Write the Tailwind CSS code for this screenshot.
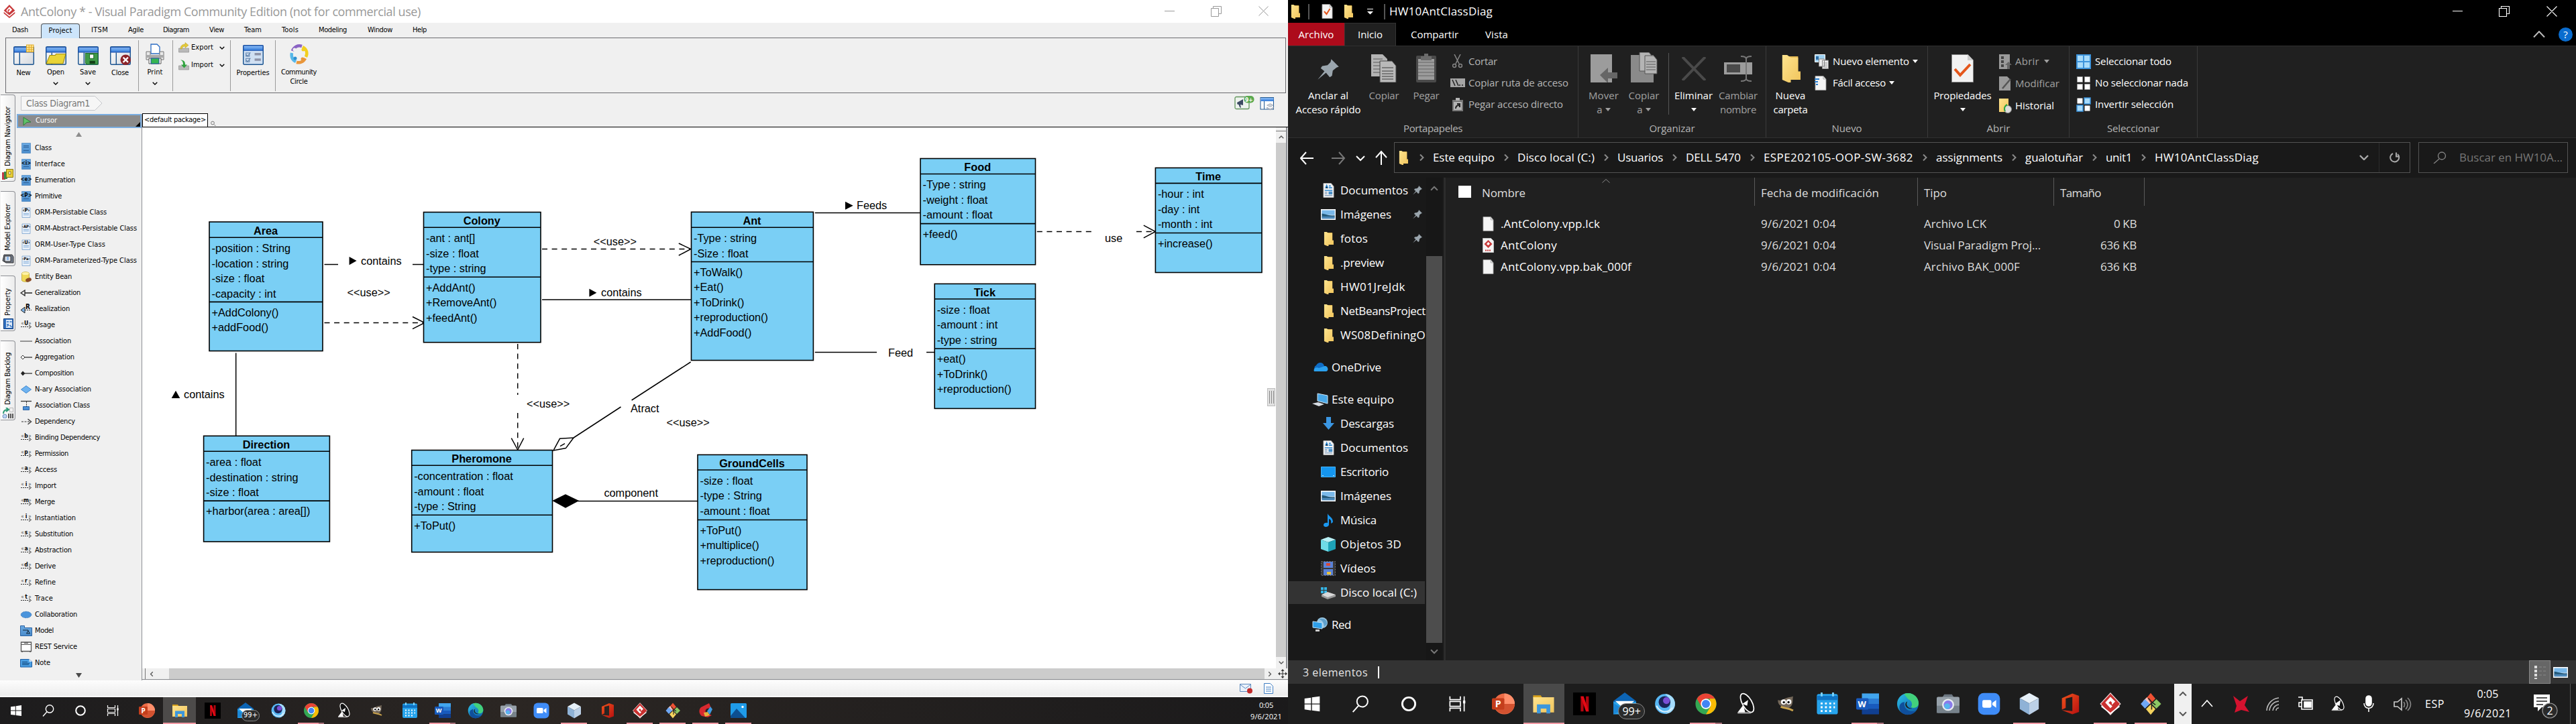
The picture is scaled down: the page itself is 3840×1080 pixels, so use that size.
<!DOCTYPE html>
<html lang="es">
<head>
<meta charset="utf-8">
<title>Escritorio</title>
<script src="https://cdn.jsdelivr.net/npm/@tailwindcss/browser@4"></script>
</head>
<body class="bg-black">
<svg class="absolute h-0 w-0">
  <defs>
    <linearGradient id="gWin" x1="0" y1="0" x2="0" y2="1"><stop offset="0" stop-color="#8fc0f8"/><stop offset="1" stop-color="#2f78d8"/></linearGradient>
    <linearGradient id="gPane" x1="0" y1="0" x2="1" y2="1"><stop offset="0" stop-color="#fff"/><stop offset="1" stop-color="#d5d8dd"/></linearGradient>
    <linearGradient id="gFold" x1="0" y1="0" x2="1" y2="1"><stop offset="0" stop-color="#ffe48e"/><stop offset="1" stop-color="#f0c45c"/></linearGradient>
    <linearGradient id="gBlue" x1="0" y1="0" x2="0" y2="1"><stop offset="0" stop-color="#6aa9e2"/><stop offset="1" stop-color="#4a8ccb"/></linearGradient>
    <linearGradient id="gEdge" x1="0" y1="0" x2="1" y2="1"><stop offset="0" stop-color="#2cc0e8"/><stop offset="1" stop-color="#0c59a4"/></linearGradient>
    <linearGradient id="gOff" x1="0" y1="0" x2="1" y2="1"><stop offset="0" stop-color="#f0531c"/><stop offset="1" stop-color="#b81010"/></linearGradient>
  </defs>
  <symbol id="win" viewBox="0 0 24 24"><path fill="#fff" d="M4 6.300l6.800-.9v6.200H4zM11.800 5.200 20 4v7.600h-8.200zM4 12.600h6.800v6.200L4 17.900zM11.800 12.600H20V20l-8.200-1.100z"/></symbol>
  <symbol id="search" viewBox="0 0 24 24"><g fill="none" stroke="#fff" stroke-width="1.400"><circle cx="14" cy="9.500" r="5.700"/><path d="M10 13.800 4 20.500"/></g></symbol>
  <symbol id="ring" viewBox="0 0 24 24"><circle cx="12" cy="12" r="6.800" fill="none" stroke="#fff" stroke-width="2"/></symbol>
  <symbol id="tview" viewBox="0 0 24 24"><g fill="none" stroke="#fff" stroke-width="1.200"><path d="M4.500 4v3.500h11V4M4.500 20v-3.500h11V20M4.500 9.500h11v5h-11zM19.500 4v16"/></g><path fill="#fff" d="M18.300 8.500h2.400v3h-2.400z"/></symbol>
  <symbol id="ppt" viewBox="0 0 24 24"><circle cx="13" cy="12" r="11" fill="#ed6c47"/><path d="M13 1a11 11 0 0 1 11 11H13z" fill="#ff8f6b"/><path d="M2 12h22a11 11 0 0 1-21 4z" fill="#d35230"/><rect x="0" y="6" width="13" height="12" rx="1.200" fill="#c43e1c"/><text x="3.400" y="15.600" font-family="Open Sans" font-weight="700" font-size="10" fill="#fff">P</text></symbol>
  <symbol id="fold" viewBox="0 0 24 24"><path fill="#d9a21b" d="M1 3h8l2 3H1z"/><path fill="url(#gFold)" d="M1 5h22v16H1z"/><path fill="#3d97dc" d="M5 12.500h14V22h-4v-5H9v5H5z"/></symbol>
  <symbol id="nfx" viewBox="0 0 24 24"><path fill="#000" d="M0 0h24v24H0z"/><path fill="#b1060f" d="M8 4h3v16H8zM13.500 4h3v16h-3z"/><path fill="#e50914" d="M8 4h3l5.500 16h-3z"/></symbol>
  <symbol id="mail" viewBox="0 0 24 24"><path fill="#0c64b4" d="M0 9 12 0l12 9v3H0z"/><path fill="#2aa5ec" d="M0 10h24v13H0z"/><path fill="#fff" d="M2 9h20l-10 9z"/><path fill="#1c87d6" d="M0 23V11l11 7z"/></symbol>
  <symbol id="chat" viewBox="0 0 24 24"><circle cx="12" cy="12" r="10.500" fill="#58b8f4"/><path d="M12 1.500a10.500 10.500 0 0 1 0 21c7-3 8-16 0-21z" fill="#a6dcfb"/><circle cx="11.500" cy="10" r="6.200" fill="#1b2458"/><circle cx="13.500" cy="8.500" r="3.600" fill="#7a4fd6"/><path d="M3 14c4 8 12 8 17 2" stroke="#d7f0fe" stroke-width="1.500" fill="none"/></symbol>
  <symbol id="chrome" viewBox="0 0 24 24"><circle cx="12" cy="12" r="11" fill="#34a853"/><path fill="#ea4335" d="M2.500 6.500A11 11 0 0 1 21.500 6.500H12L7.200 14.800z"/><path fill="#fbbc05" d="M21.500 6.500A11 11 0 0 1 12 23l4.800-8.200L16 6.500z"/><circle cx="12" cy="12" r="5.400" fill="#fff"/><circle cx="12" cy="12" r="4.300" fill="#4285f4"/></symbol>
  <symbol id="dish" viewBox="0 0 24 24"><ellipse cx="13" cy="11" rx="5" ry="11" transform="rotate(-30 13 11)" fill="#111" stroke="#fff" stroke-width="1.200"/><path d="M8 12 14 8l-1 6zM3 21l6-8 2 8z" fill="#fff"/><path d="M3 21.500h14" stroke="#bbb" stroke-width="1.300"/></symbol>
  <symbol id="gimp" viewBox="0 0 24 24"><path fill="#75695b" d="M3 8c3 1 4-1 5 0 3-3 8-3 11-4-1 4 1 9-4 12-4 1-7 0-9-2-2-1-3-3-3-6z"/><circle cx="9" cy="10" r="2.700" fill="#fff"/><circle cx="14.500" cy="9.800" r="2.700" fill="#fff"/><circle cx="9.300" cy="10.300" r="1.200"/><circle cx="14.200" cy="10.200" r="1.200"/><path d="M6 15c4 2 8 1 13 4" stroke="#c9a24b" stroke-width="2" fill="none"/></symbol>
  <symbol id="cal" viewBox="0 0 24 24"><rect x="1" y="1.500" width="22" height="21.500" rx="2" fill="#27a4ec"/><path fill="#0f74c4" d="M1 3.500h22V8H1z"/><path stroke="#7fd3fb" stroke-width="2" d="M6 0v4M18 0v4"/><path stroke="#fff" stroke-width="2" stroke-dasharray="2 2.500" d="M5 11.500h15M5 15.500h15M5 19.500h11"/></symbol>
  <symbol id="word" viewBox="0 0 24 24"><path fill="#41a5ee" d="M6 1h18v6H6z"/><path fill="#2b7cd3" d="M6 6.500h18V12H6z"/><path fill="#185abd" d="M6 12h18v5.500H6z"/><path fill="#103f91" d="M6 17.500h18V23H6z"/><rect x="0" y="6" width="13" height="12" rx="1.200" fill="#185abd"/><text x="1.700" y="15.300" font-family="Open Sans" font-weight="700" font-size="9" fill="#fff">W</text></symbol>
  <symbol id="edge" viewBox="0 0 24 24"><circle cx="12" cy="12" r="11.300" fill="url(#gEdge)"/><path fill="#42d17c" d="M8 1.500c9-3 16 4 15.300 10.500-.5 4-5 5-8 3.500 2-3 1-7-3-8.500z"/><path fill="#0f4f9c" d="M8.500 10c-1 6 3 11 12 9.500A11.300 11.300 0 0 1 5 21C1 15 4 10 8.500 10z"/><path fill="#1e1e1e" d="M11.500 9.500c-2 3 0 7 5 7.300-2 1-6 0-7-3-.5-2 .5-4 2-4.300z"/></symbol>
  <symbol id="cam" viewBox="0 0 24 24"><path fill="#6b7680" d="M8 2h8l2 3H6z"/><rect x="0" y="4.500" width="24" height="17" rx="1.500" fill="#97a1aa"/><path fill="#77828b" d="M0 14h24v7.500H0z"/><circle cx="12" cy="13" r="6.300" fill="#e8edf1"/><circle cx="12" cy="13" r="4.700" fill="#8a7bea"/><circle cx="11" cy="14.500" r="3" fill="#57b6ee"/></symbol>
  <symbol id="zoom" viewBox="0 0 24 24"><rect x=".5" y=".5" width="23" height="23" rx="6" fill="#3f8cf7"/><rect x="5" y="8" width="9.500" height="8" rx="1.500" fill="#fff"/><path fill="#fff" d="m15.500 11 4-3v8l-4-3z"/></symbol>
  <symbol id="nb" viewBox="0 0 24 24"><path fill="#e6f0f8" d="M12 .5 22 6l-10 5.500L2 6z"/><path fill="#8fb2d6" d="M2 6l10 5.500V23.500L2 17.500z"/><path fill="#bcd0e6" d="M22 6l-10 5.500V23.500l10-6z"/></symbol>
  <symbol id="office" viewBox="0 0 24 24"><path fill="url(#gOff)" d="M15 1l7 2.500v17L15 23 4 18.500l11 1V4.500L8 6.300v10L4 18V6z"/></symbol>
  <symbol id="vp" viewBox="0 0 24 24"><path fill="#c9302f" stroke="#f3dede" stroke-width=".8" d="M12 .6 22.500 12 12 23.400 1.500 12z"/><path fill="none" stroke="#fff" stroke-width="1.300" d="M2.500 14.500 12 22l9.500-7.500"/><path fill="#fff" d="M12 4.500 17 9.500l-3.500 3.500v-2.500L12 9l-2 2 4 3.500-2 2-5.500-6z"/></symbol>
  <symbol id="vplogo" viewBox="0 0 24 24"><path fill="#c8393a" d="M12 0 22 10.500 12 19 2 10.500z"/><path fill="#c8393a" d="M2 13l10 8.300L22 13v2.500L12 24 2 15.500z"/><path fill="#fff" d="M12 4l5 5-5 5-2-2 3-3-1.500-1.500-2.500 2.500v4.500L6.500 10z"/></symbol>
  <symbol id="git" viewBox="0 0 24 24"><path fill="#f05133" d="m12 .5 5 6-5 5-4-6z"/><path fill="#f7c6bd" d="m8 5 4 6.500-2 1L4 9z"/><path fill="#6fa8f5" d="M6 7l5 5-5 5-4.500-5z"/><path fill="#8cc864" d="M18 7l5 5-5 5-5-5z"/><path fill="#f4d35e" d="m12 12.500 5 5-5 6-5-6z"/><path stroke="#222" stroke-width="1.100" fill="none" d="M9.500 6 13 10v8m0-8 4 3"/></symbol>
  <symbol id="cc" viewBox="0 0 24 24"><path fill="#d8292f" d="M17 1 5 7c-4 4-3 10 1 13l9 2 6-3-5-2c-5 0-6-6-2-8l6-1z"/><path fill="#3f9ae0" d="m14 13 5-7 3 4-4 8z"/><path fill="#e8b13c" d="m9 15 6-1 3 5-7 2z"/></symbol>
  <symbol id="photos" viewBox="0 0 24 24"><rect x="0" y="1" width="24" height="22" rx="1.500" fill="#1f9be8"/><path fill="#0d4f90" d="M0 20 9 9l13 14H0z"/><circle cx="18" cy="6.500" r="1.700" fill="#fff"/></symbol>
  <symbol id="qfold" viewBox="0 0 16 20" preserveAspectRatio="none"><path fill="#e9bd55" d="M3 1h11v17H3z"/><path fill="url(#gFold)" d="M1 0h4l3 2v18H6l-5-2zM8 2h6v10h2v6H8z"/></symbol>
  <symbol id="doc" viewBox="0 0 18 20" preserveAspectRatio="none"><path fill="#f4f4f4" stroke="#9a9a9a" stroke-width=".8" d="M1 .5h12l4 4v15H1z"/><path fill="none" stroke="#9a9a9a" stroke-width=".8" d="M13 .5v4h4"/></symbol>
  <symbol id="docb" viewBox="0 0 18 20" preserveAspectRatio="none"><path fill="#f4f4f4" stroke="#bbb" stroke-width=".8" d="M1 .5h12l4 4v15H1z"/><path stroke="#2d87d0" stroke-width="1.500" d="M4 7 6 3l2 4M9.500 4h3M9.500 6.500h5M3 10h12"/><path stroke="#5a7fa8" d="M3 12.500h4M3 14.500h4M3 17h12"/><path fill="#4a90c8" d="M9 11.500h6v4H9z"/></symbol>
  <symbol id="pic" viewBox="0 0 22 14" preserveAspectRatio="none"><path fill="#dce8f2" stroke="#fff" d="M.5.500h21v13H.5z"/><path fill="#7ab9ea" d="M1.500 1.500h19v6h-19z"/><path fill="#24597a" d="M1.500 6c5 0 9 3 19 2v3h-19z"/><path fill="#4c88b8" d="M1.500 9.500h19v3h-19z"/></symbol>
  <symbol id="pin" viewBox="0 0 16 16"><path fill="#9aa5ad" d="m10 1 5 5-1.500.5-2.500 2-.5 3.500L9 13 6.500 10 1 14.500 5.500 9 3 7l1-1.500 3.500-.5L9.500 3z"/></symbol>
  <symbol id="appwin" viewBox="0 0 30 30"><rect x=".7" y="3.700" width="28.600" height="25.600" rx="1.500" fill="url(#gPane)" stroke="#1c5590" stroke-width="1.400"/><path fill="url(#gWin)" stroke="#1a4fae" d="M1 4.500h28v7H1z"/><path stroke="#1c5590" stroke-width="1.400" d="M9 12v17"/></symbol>
  <symbol id="chev" viewBox="0 0 8 5"><path d="m.7.700 3.300 3.300L7.300.7" fill="none" stroke="currentColor" stroke-width="1.300"/></symbol>
  <symbol id="tri" viewBox="0 0 8 5"><path d="M0 0h8L4 5z" fill="currentColor"/></symbol>
</svg>

<div class="flex h-[1080px] w-[3840px] overflow-hidden whitespace-nowrap">

<!-- ================= Visual Paradigm ================= -->
<section class="flex h-full w-[1920px] flex-col overflow-hidden bg-[#f0f0f0] font-['DejaVu_Sans_Condensed','DejaVu_Sans',sans-serif] text-[11px] text-black">
  <header class="flex h-[34px] shrink-0 items-center bg-white pl-1">
    <svg class="h-6 w-5" preserveAspectRatio="none"><use href="#vplogo"/></svg>
    <span data-w="596" class="ml-[7px] font-['Open_Sans',sans-serif] text-[18px] leading-[34px] text-[#999]">AntColony * - Visual Paradigm Community Edition (not for commercial use)</span>
    <div class="mr-[29px] ml-auto flex items-center">
      <svg class="h-4 w-[155px]" viewBox="0 0 155 16" fill="none" stroke="#999"><path d="M0 7.500h15M69.500 3.500h11v12h-11zM72.500 3.500v-3h12v11h-4M140.500.500l14 14M154.500.500l-14 14"/></svg>
    </div>
  </header>
  <nav class="relative z-10 -mb-px flex h-[23px] shrink-0 items-center pl-[18px]">
    <span data-w="24">Dash</span>
    <span class="ml-[19px] flex h-[22px] w-[58px] items-center justify-center self-end rounded-t-sm border border-b-0 border-[#4f5358] bg-[#cde5fb]"><span data-w="35">Project</span></span>
    <span data-w="25" class="ml-[17px]">ITSM</span>
    <span data-w="23" class="ml-[30px]">Agile</span>
    <span data-w="39" class="ml-[29px]">Diagram</span>
    <span data-w="22" class="ml-[30px]">View</span>
    <span data-w="26" class="ml-[30px]">Team</span>
    <span data-w="25" class="ml-[30px]">Tools</span>
    <span data-w="42" class="ml-[30px]">Modeling</span>
    <span data-w="37" class="ml-[31px]">Window</span>
    <span data-w="21" class="ml-[30px]">Help</span>
  </nav>
  <div class="mr-[3px] ml-2 flex h-[83px] shrink-0 border border-[#6b6b6f] pl-[2px]">
    <div class="flex w-12 flex-col items-center pt-[9px]">
      <svg class="h-[31px] w-[31px]" viewBox="0 0 30 30"><use href="#appwin"/><path fill="#ffe9a0" stroke="#e0a81e" d="M19 1h10v10H19zM22.500 1v10M25.800 1v10M19 4.500h10M19 7.800h10"/></svg>
      <span data-w="21" class="mt-[4px] leading-[15px]">New</span>
    </div>
    <div class="flex w-12 flex-col items-center pt-[9px]">
      <svg class="h-[31px] w-[31px]" viewBox="0 0 30 30"><use href="#appwin"/><path fill="#e9d436" stroke="#a08c10" d="M6 16h8l1-2h14l-4 14H1z"/></svg>
      <span data-w="26" class="mt-[3px] leading-[15px]">Open</span><svg class="mt-[7px] h-[5px] w-2"><use href="#chev"/></svg>
    </div>
    <div class="flex w-12 flex-col items-center pt-[9px]">
      <svg class="h-[31px] w-[31px]" viewBox="0 0 30 30"><use href="#appwin"/><path fill="#3f9a48" stroke="#1e6b28" d="M11 13h18v16H13l-2-2z"/><path fill="#fff" stroke="#1e6b28" d="M17 14.500h6v6h-6z"/><path fill="#123f18" d="M17 24h8v4h-8z"/></svg>
      <span data-w="24" class="mt-[3px] leading-[15px]">Save</span><svg class="mt-[7px] h-[5px] w-2"><use href="#chev"/></svg>
    </div>
    <div class="flex w-12 flex-col items-center pt-[9px]">
      <svg class="h-[31px] w-[31px]" viewBox="0 0 30 30"><use href="#appwin"/><circle cx="22.500" cy="22.500" r="7.500" fill="#8c2328"/><path stroke="#fff" stroke-width="2.200" d="m19 19 7 7m0-7-7 7"/></svg>
      <span data-w="26" class="mt-[4px] leading-[15px]">Close</span>
    </div>
    <div class="mt-[3px] ml-[3px] h-[76px] w-px bg-[#9a9a9a]"></div>
    <div class="flex w-[48px] flex-col items-center pt-[8px]">
      <svg class="h-8 w-7" viewBox="0 0 28 32"><path fill="#fff" stroke="#2b6cc4" stroke-width="1.300" d="M8 1h9l4 4v10H8z"/><path fill="#e8e8e8" stroke="#777" d="M1 12h6v6h14v-6h6v12H1z"/><path fill="#a9a9a9" d="M1 17h26v4H1z"/><path fill="#fff" stroke="#555" d="M5 22h18v8H5z"/><path fill="#35b552" stroke="#1b52a4" d="M8 22h12v8H8z"/></svg>
      <span data-w="23" class="mt-[3px] leading-[15px]">Print</span><svg class="mt-[7px] h-[5px] w-2"><use href="#chev"/></svg>
    </div>
    <div class="mt-[3px] ml-[2px] h-[76px] w-px bg-[#9a9a9a]"></div>
    <div class="flex w-[85px] flex-col gap-[10px] pt-[6px] pl-2">
      <div class="flex h-4 items-center"><svg class="h-4 w-4" viewBox="0 0 16 16"><path fill="#b9b9b9" stroke="#888" stroke-width=".6" d="M.5 9h15v6H.5z"/><path fill="#e3c93a" stroke="#b79b17" stroke-width=".5" d="M3 10c0-5 3-7 7-7V.5l5 4-5 4V6c-3 0-4 1-5 4z"/></svg><span data-w="33" class="ml-[3px]">Export</span><svg class="ml-[9px] h-[5px] w-2"><use href="#chev"/></svg></div>
      <div class="flex h-4 items-center"><svg class="h-4 w-4" viewBox="0 0 16 16"><path fill="#b9b9b9" stroke="#888" stroke-width=".6" d="M.5 9h15v6H.5z"/><path fill="#2fa23e" d="M3 .5c5 0 7 2 7 7h3l-4.500 5-4.500-5h3c0-4-1-6-4-7z"/></svg><span data-w="33" class="ml-[3px]">Import</span><svg class="ml-[9px] h-[5px] w-2"><use href="#chev"/></svg></div>
    </div>
    <div class="mt-[3px] h-[76px] w-px bg-[#9a9a9a]"></div>
    <div class="flex w-[66px] flex-col items-center pt-[9px]">
      <svg class="h-[31px] w-[31px]" viewBox="0 0 30 30"><rect x=".7" y="1.700" width="28.600" height="27.600" rx="1.500" fill="#cfdff2" stroke="#1c5590" stroke-width="1.400"/><path fill="url(#gWin)" stroke="#1a4fae" d="M1 2h28v7H1z"/><path fill="none" stroke="#5b7fa8" d="M4.500 12.500h5v5h-5zM4.500 20.500h5v5h-5zM5 15l2 2 4-5M5 23l2 2 4-5"/><path fill="#8d93a8" d="M17 12.500h9V16h-9zM17 20.500h9V24h-9z"/></svg>
      <span data-w="49" class="mt-[4px] leading-[15px]">Properties</span>
    </div>
    <div class="mt-[3px] h-[76px] w-px bg-[#9a9a9a]"></div>
    <div class="flex w-[69px] flex-col items-center pt-[8px]">
      <svg class="h-8 w-[30px]" viewBox="0 0 30 32" fill="none" stroke-width="4.500"><path stroke="#8a63c4" d="M5 11C7 5 13 2 19 4"/><path stroke="#f2cf1e" d="M20 5c6 3 8 9 5 15"/><path stroke="#e9963a" d="M24 22c-3 6-9 7-13 6"/><path stroke="#56b7e8" d="M10 27c-6-3-7-8-6-13"/><circle cx="8" cy="9" r="2.500" fill="#f0f0f0" stroke="none"/><circle cx="21" cy="9" r="2.500" fill="#f2cf1e" stroke="none"/><circle cx="20" cy="23" r="2.500" fill="#e9963a" stroke="none"/><circle cx="9" cy="22" r="2.500" fill="#2d8fd0" stroke="none"/></svg>
      <span data-w="53" class="mt-[4px] leading-[14px]">Community</span><span data-w="26" class="leading-[14px]">Circle</span>
    </div>
  </div>

  <div class="flex h-[876px] shrink-0">
    <aside id="sideTabs" class="flex w-[25px] flex-col gap-[14px] pt-[2px] pl-px"></aside>
    <div class="flex w-[1895px] flex-col">
      <div class="flex h-[31px] items-start pt-1 pl-[6px]">
        <div class="relative flex h-[22px] w-[122px] items-center pl-2">
          <svg class="absolute inset-0 h-full w-full" viewBox="0 0 122 22"><path fill="#f6f6f6" stroke="#c4c6ca" d="M.5.500h110l10.500 10.500-10.500 10.500H.5z"/></svg>
          <span data-w="95" class="relative text-[14px] text-[#777]">Class Diagram1</span>
        </div>
        <svg class="mr-[20px] ml-auto h-[22px] w-[60px]" viewBox="0 0 60 22"><rect x="1" y="1.500" width="21" height="18" rx="2" fill="#eef3ee" stroke="#62955c" stroke-width="1.300"/><path fill="#3d4a63" d="M4 10 13 5v9l-4-1 1 5-2-1-1.500-4-2-.5z"/><rect x="14.500" y="0" width="15" height="10.500" rx="5" fill="#5aa84e"/><text x="16" y="8.500" font-size="8.500" font-weight="700" fill="#fff" font-family="DejaVu Sans Condensed">9+</text><g transform="translate(38.500 2)"><rect x=".5" y=".5" width="19.500" height="17.500" fill="#fff" stroke="#1c5590"/><path fill="url(#gWin)" d="M1 1h19v5H1z"/><path stroke="#1c5590" d="M6 6v12"/><path fill="#c9cfd8" stroke="#8a94a4" stroke-width=".6" d="m10 12 5-2.500 5 2.500-5 2.500zM10 15l5 2.500 5-2.500v1.500L15 19l-5-2.500z"/></g></svg>
      </div>
      <div class="flex h-[845px]">
        <div class="flex w-[187px] flex-col border-r border-[#8f9196]">
          <div class="relative flex h-[21px] w-[186px] shrink-0 items-center border-2 border-[#7aade0] bg-[#8b8b8b] pl-[7px] text-white">
            <svg class="h-[14px] w-[13px]" viewBox="0 0 13 14"><path fill="#5fc36a" stroke="#2d7c38" d="m1 1 11 7-6 .5L1 13z"/></svg>
            <span data-w="32" class="ml-[6px]">Cursor</span>
            <svg class="absolute right-0 bottom-0 h-[7px] w-[7px]"><path d="M7 0v7H0z"/></svg>
          </div>
          <div class="flex h-[18px] shrink-0 items-center justify-center pr-px text-[#8d8d8d]"><svg class="h-[7px] w-[9px] rotate-180" viewBox="0 0 8 5" preserveAspectRatio="none"><path d="M0 0h8L4 5z" fill="currentColor"/></svg></div>
          <div id="palette" class="flex flex-col"></div>
          <div class="flex h-[13px] items-center justify-center pr-px text-[#4a4a4a]"><svg class="h-[7px] w-[9px]" viewBox="0 0 8 5" preserveAspectRatio="none"><path d="M0 0h8L4 5z" fill="currentColor"/></svg></div>
        </div>
        <div class="flex w-[1708px] flex-col">
          <div class="flex h-5 shrink-0 items-end border-b-[1.500px] border-black">
            <div class="flex h-5 w-[98px] items-center border-[1.500px] border-b-0 border-black bg-white pl-[2px]"><span data-w="92">&lt;default package&gt;</span></div>
            <svg class="mb-px ml-1 h-2 w-2" viewBox="0 0 8 8" fill="none" stroke="#777"><circle cx="3" cy="3.500" r="2.400"/><path d="m5 5.500 2.500 2.500"/></svg>
          </div>
          <div class="flex h-[807px]">
            <div class="relative w-[1690px] bg-white">
              <svg id="diagram" class="block h-[807px] w-[1690px]" viewBox="212 190 1690 807"></svg>
              <div class="absolute top-[389px] right-px flex h-[27px] w-3 justify-center gap-[2px] border border-[#bdbdbd] bg-[#e1e1e1] py-[3px]"><i class="w-px bg-[#888]"></i><i class="w-px bg-[#888]"></i><i class="w-px bg-[#888]"></i></div>
            </div>
            <div class="flex w-[17px] flex-col border-r-2 border-[#8f9196] bg-[#ccc]">
              <div class="h-[6px] border-b border-[#777] bg-[#f0f0f0]"></div>
              <div class="flex h-[17px] items-center justify-center bg-[#f0f0f0] text-[#555]"><svg class="h-[5px] w-2 rotate-180"><use href="#chev"/></svg></div>
              <div class="mt-auto flex h-[17px] items-center justify-center bg-[#f0f0f0] text-[#555]"><svg class="h-[5px] w-2"><use href="#chev"/></svg></div>
            </div>
          </div>
          <div class="flex h-[17px] items-stretch border-b-[1.500px] border-[#8a8c90] bg-[#ccc]">
            <div class="w-[5px] border-r border-[#777] bg-[#f0f0f0]"></div>
            <div class="flex w-[35px] items-center bg-[#f0f0f0] pl-[5px] text-[#555]"><svg class="h-[5px] w-2 rotate-90"><use href="#chev"/></svg></div>
            <div class="ml-auto flex w-[35px] items-center bg-[#f0f0f0] pl-1 text-[#555]"><svg class="h-[5px] w-2 -rotate-90"><use href="#chev"/></svg><svg class="ml-2 h-[14px] w-[14px]" viewBox="0 0 14 14"><path fill="#333" d="m7 0 2.500 3h-5zM7 14l2.500-3h-5zM0 7l3-2.500v5zM14 7l-3-2.500v5z"/><path stroke="#333" d="M7 2v10M2 7h10"/></svg></div>
          </div>
        </div>
      </div>
    </div>
  </div>
  <footer class="flex h-[25px] shrink-0 items-center justify-end border-b-2 border-white bg-linear-to-b from-[#fdfdfd] to-[#ececec] pr-[20px]">
    <svg class="h-[18px] w-[52px]" viewBox="0 0 52 18"><path fill="#eaf1fa" stroke="#5b89bd" d="M.5 2.500h16v11H.5z"/><path fill="none" stroke="#5b89bd" d="m.5 3 8 6 8-6"/><circle cx="15" cy="12.500" r="4" fill="#c22a2a"/><path fill="#fff" stroke="#3d7dc2" d="M36.500 1.500h9l4 4v11h-13z"/><path stroke="#3d7dc2" d="M39 7h8M39 10h8M39 13h8"/></svg>
  </footer>
  <div class="flex h-10 shrink-0 bg-linear-to-r from-[#1d1c1d] via-[#2b2623] via-40% to-[#1b1a1b] text-white">
    <div id="barL" class="flex"></div>
    <div class="mr-[9px] ml-auto flex flex-col items-center justify-center font-['Open_Sans',sans-serif] text-[11px] leading-[17px]"><span data-w="21">0:05</span><span data-w="47">9/6/2021</span></div>
  </div>
</section>

<!-- ================= Explorador de archivos ================= -->
<section class="flex h-full w-[1920px] flex-col overflow-hidden bg-[#191919] font-['Open_Sans','Noto_Sans',sans-serif] text-[15px] text-white">
  <header class="flex h-[34px] shrink-0 items-center bg-black pl-1">
    <svg class="h-[21px] w-[14px]"><use href="#qfold"/></svg>
    <i class="ml-3 h-[23px] w-[2px] border-x border-[#555]"></i>
    <svg class="ml-[18px] h-[22px] w-[17px]"><use href="#doc"/><path d="m4 11 3.500 4 5-8" stroke="#e4561b" stroke-width="2" fill="none"/></svg>
    <svg class="ml-4 h-[21px] w-[14px]"><use href="#qfold"/></svg>
    <svg class="ml-[21px] h-[9px] w-[9px]" viewBox="0 0 9 9"><path fill="#fff" d="M0 0h9v1H0zM0 4h9L4.500 8.500z"/></svg>
    <i class="ml-4 h-[23px] w-[2px] border-x border-[#555]"></i>
    <span data-w="154" class="ml-[6px] text-[17px]">HW10AntClassDiag</span>
    <svg class="mr-7 ml-auto h-4 w-[156px]" viewBox="0 0 156 16" fill="none" stroke="#fff" stroke-width="1.100"><path d="M0 7.500h15M69.500 3.500h11v12h-11zM72.500 3.500v-3h12v11h-4M140.500.500l15 15M155.500.500l-15 15"/></svg>
  </header>
  <nav class="flex h-[34px] shrink-0 items-center bg-black text-[15px]">
    <span class="flex h-full w-[84px] items-center justify-center bg-[#ad0b1b]"><span data-w="53">Archivo</span></span>
    <span class="flex h-full w-[77px] items-center justify-center border border-b-0 border-[#333] bg-[#202020]"><span data-w="37">Inicio</span></span>
    <span data-w="71" class="ml-[22px]">Compartir</span>
    <span data-w="34" class="ml-10">Vista</span>
    <svg class="mr-[20px] ml-auto h-[10px] w-[18px]" viewBox="0 0 18 10"><path d="m1 9.500 8-8.500 8 8.500" fill="none" stroke="#bbb" stroke-width="2"/></svg>
    <span class="mr-[5px] flex h-[21px] w-[21px] items-center justify-center rounded-full bg-[#0a6cce] text-[15px]">?</span>
  </nav>
  <div class="flex h-[138px] shrink-0 border-y border-[#303030] bg-[#202020] text-[15px] leading-[21px]">
    <!-- Portapapeles -->
    <div class="flex w-[433px] flex-col border-r border-[#3a3a3a]">
      <div class="flex h-[112px]">
        <div class="flex w-[120px] flex-col items-center pt-[13px]"><svg class="mt-1 mb-[10px] h-[36px] w-[36px]"><use href="#pin"/></svg><span data-w="60">Anclar al</span><span data-w="97">Acceso rápido</span></div>
        <div class="flex w-[46px] flex-col items-center pt-[12px] text-[#a0a0a0]"><svg class="mb-[9px] h-[42px] w-[38px]" viewBox="0 0 38 42"><path fill="#b4b4b4" d="M0 0h17l7 7v26H0z"/><path stroke="#777" stroke-width="1.500" d="M3 7h14M3 12h17M3 17h17M3 22h17M3 27h17"/><path fill="#b9b9b9" stroke="#444" d="M13 10h18l6 7v25H13z"/><path stroke="#666" stroke-width="1.500" d="M16 20h17M16 25h17M16 29h17M16 33h17M16 37h17"/></svg><span data-w="45">Copiar</span></div>
        <div class="ml-5 flex w-[40px] flex-col items-center pt-[11px] text-[#a0a0a0]"><svg class="mb-[9px] h-[43px] w-[30px]" viewBox="0 0 30 43"><rect width="30" height="40" y="3" rx="2" fill="#4a4a4a"/><path fill="#9c9c9c" d="M3 8h24v31H3z"/><path stroke="#777" stroke-width="1.300" d="M3 13h24M3 18h24M3 23h24M3 28h24M3 33h24"/><path fill="#6b6b6b" d="M7 4h5V0h6v4h5v6H7z"/></svg><span data-w="39">Pegar</span></div>
        <div class="ml-[16px] flex flex-col gap-[11px] pt-[12px] text-[#b5b5b5]">
          <div class="flex h-[21px] items-center"><svg class="mr-[9px] ml-[3px] h-[21px] w-[15px]" viewBox="0 0 15 21" fill="none" stroke="#888" stroke-width="1.500"><path d="m3 0 7 14M12 0 5 14"/><circle cx="3" cy="17" r="2.500"/><circle cx="12" cy="17" r="2.500"/></svg><span data-w="43">Cortar</span></div>
          <div class="flex h-[21px] items-center"><svg class="mr-[5px] h-[13px] w-[22px]"><path fill="#a5a5a5" d="M0 0h22v13H0z"/><path stroke="#222" stroke-width="1.500" d="m3 2 4 9M8 2l4 9M13 10h2M17 10h2"/></svg><span data-w="149">Copiar ruta de acceso</span></div>
          <div class="flex h-[21px] items-center"><svg class="mr-2 ml-[3px] h-[20px] w-[16px]"><path fill="#777" d="M0 3h16v17H0z"/><path fill="#b5b5b5" d="M2 6h12v12H2zM5 0h6v4H5z"/><path stroke="#222" stroke-width="2" fill="none" d="M5 16c0-4 2-5 5-5M7 9h4v5"/></svg><span data-w="141">Pegar acceso directo</span></div>
        </div>
      </div>
      <div class="flex justify-center text-[#b5b5b5]"><span data-w="88">Portapapeles</span></div>
    </div>
    <!-- Organizar -->
    <div class="flex w-[280px] flex-col border-r border-[#3a3a3a]">
      <div class="flex h-[112px]">
        <div class="flex w-[73px] flex-col items-center pt-[12px] pl-[2px] text-[#a0a0a0]"><svg class="mb-[9px] h-[42px] w-[40px]" viewBox="0 0 40 42"><path fill="#9c9c9c" d="M0 0h32v42H0z"/><path fill="#666" d="M14 31 26 20v7h14v9H26v7z"/></svg><span data-w="45">Mover</span><span class="flex items-center gap-1">a <svg class="h-[5px] w-2"><use href="#tri"/></svg></span></div>
        <div class="flex w-[49px] flex-col items-center pt-[9px] text-[#a0a0a0]"><svg class="mb-[9px] h-[45px] w-[40px]" viewBox="0 0 40 45"><path fill="#8a8a8a" d="M0 4h34v41H0z"/><path fill="#b4b4b4" stroke="#555" d="M13 0h14l5 6v22H13z"/><path fill="#b4b4b4" stroke="#555" d="M21 5h13l5 6v21H21z"/><path stroke="#777" stroke-width="1.300" d="M23 14h14M23 18h14M23 22h14M23 26h14"/></svg><span data-w="46">Copiar</span><span class="flex items-center gap-1">a <svg class="h-[5px] w-2"><use href="#tri"/></svg></span></div>
        <div class="mt-[10px] ml-[12px] h-[92px] w-px bg-[#555]"></div>
        <div class="flex w-[73px] flex-col items-center pt-[16px]"><svg class="mb-[12px] h-[35px] w-[36px]" viewBox="0 0 36 35"><path stroke="#4a4a4a" stroke-width="4" d="m1 0 34 35M35 0 1 35"/></svg><span data-w="57">Eliminar</span><svg class="mt-2 h-[5px] w-2"><use href="#tri"/></svg></div>
        <div class="flex w-[60px] flex-col items-center pt-[14px] text-[#a0a0a0]"><svg class="mb-[10px] h-[39px] w-[42px]" viewBox="0 0 42 39"><path fill="#9c9c9c" d="M0 10h42v18H0z"/><path fill="#4a4a4a" d="M4 13h20v12H4z"/><path fill="none" stroke="#777" stroke-width="2" d="M25 1c5 0 8 1 8 4v29c0 3-3 4-8 4M41 1c-5 0-8 1-8 4v29c0 3 3 4 8 4"/></svg><span data-w="58">Cambiar</span><span data-w="54">nombre</span></div>
      </div>
      <div class="flex justify-center text-[#b5b5b5]"><span data-w="68">Organizar</span></div>
    </div>
    <!-- Nuevo -->
    <div class="flex w-[241px] flex-col border-r border-[#3a3a3a]">
      <div class="flex h-[112px]">
        <div class="flex w-[72px] flex-col items-center pt-[13px]"><svg class="mb-[9px] h-[41px] w-[29px]"><use href="#qfold"/></svg><span data-w="45">Nueva</span><span data-w="51">carpeta</span></div>
        <div class="flex flex-col gap-[11px] pt-[12px]">
          <div class="flex h-[21px] items-center"><svg class="mr-[6px] h-[22px] w-[21px]" viewBox="0 0 21 22"><path fill="#9fd0f0" stroke="#fff" d="M.5.500h15v11H.5z"/><path fill="#2d6da5" d="M2 3h4v5H2z"/><path fill="#eee" stroke="#888" d="M6.500 7h8v11h-8zM11.500 9h9v12.500h-9z"/><path stroke="#888" d="M13 13h6M13 16h6M13 19h6"/></svg><span data-w="114">Nuevo elemento</span><svg class="ml-[5px] h-[5px] w-2"><use href="#tri"/></svg></div>
          <div class="flex h-[21px] items-center"><svg class="mr-[9px] h-[22px] w-[18px]"><use href="#doc"/><path stroke="#2a7fd0" stroke-width="2" d="M0 5h7M0 9h5M2 13h3"/></svg><span data-w="79">Fácil acceso</span><svg class="ml-[5px] h-[5px] w-2"><use href="#tri"/></svg></div>
        </div>
      </div>
      <div class="flex justify-center text-[#b5b5b5]"><span data-w="45">Nuevo</span></div>
    </div>
    <!-- Abrir -->
    <div class="flex w-[211px] flex-col border-r border-[#3a3a3a]">
      <div class="flex h-[112px]">
        <div class="flex w-[103px] flex-col items-center pt-[12px]"><svg class="mb-[9px] h-[42px] w-[33px]" viewBox="0 0 33 42"><path fill="#f2f2f2" stroke="#888" d="M.5.500h24l8 9v32H.5z"/><path fill="#ccc" d="M24 0v9h9z"/><path d="m5 22 8 9 15-16" stroke="#e4561b" stroke-width="4" fill="none"/></svg><span data-w="86">Propiedades</span><svg class="mt-2 h-[5px] w-2"><use href="#tri"/></svg></div>
        <div class="ml-[3px] flex flex-col gap-[12px] pt-[12px]">
          <div class="flex h-[21px] items-center text-[#a0a0a0]"><svg class="mr-[5px] h-[22px] w-[19px]"><path fill="#9a9a9a" d="M0 0h16v22H0z"/><path fill="#444" d="M3 3h4v4H3zM3 9h4v4H3zM3 15h4v4H3z"/><path fill="#666" d="m14 11 5 5h-3v6h-4v-6H9z"/></svg><span data-w="36">Abrir</span><svg class="ml-[7px] h-[5px] w-2"><use href="#tri"/></svg></div>
          <div class="flex h-[21px] items-center text-[#a0a0a0]"><svg class="mr-[5px] h-[21px] w-[19px]"><path fill="#9a9a9a" d="M0 0h12l5 5v16H0z"/><path stroke="#555" stroke-width="2.500" d="M17 4 5 18"/></svg><span data-w="66">Modificar</span></div>
          <div class="flex h-[21px] items-center"><svg class="mr-[5px] h-[22px] w-[19px]" viewBox="0 0 19 22"><path fill="url(#gFold)" d="M0 0h14v20H0z"/><circle cx="13" cy="16" r="5.500" fill="#ddd" stroke="#888"/><path fill="none" stroke="#2aa53a" stroke-width="2" d="M12 9c-4 2-5 6-3 10"/></svg><span data-w="58">Historial</span></div>
        </div>
      </div>
      <div class="flex justify-center text-[#b5b5b5]"><span data-w="35">Abrir</span></div>
    </div>
    <!-- Seleccionar -->
    <div class="flex w-[191px] flex-col border-r border-[#3a3a3a]">
      <div class="flex h-[112px] flex-col gap-[11px] pt-[12px] pl-[10px]">
        <div class="flex h-[21px] items-center gap-[6px]"><svg class="h-[22px] w-[22px]"><path fill="#3d94dc" d="M0 0h22v22H0z"/><path fill="#a8dbfa" d="M2 2h8v8H2zM12 2h8v8h-8zM2 12h8v8H2zM12 12h8v8h-8z"/></svg><span data-w="114">Seleccionar todo</span></div>
        <div class="flex h-[21px] items-center gap-[6px]"><svg class="h-[22px] w-[22px]"><path fill="#fff" stroke="#999" stroke-width=".7" d="M1.500 1.500h8v8h-8zM12.500 1.500h8v8h-8zM1.500 12.500h8v8h-8zM12.500 12.500h8v8h-8z"/></svg><span data-w="139">No seleccionar nada</span></div>
        <div class="flex h-[21px] items-center gap-[6px]"><svg class="h-[22px] w-[22px]"><path fill="#fff" d="M1.500 1.500h8v8h-8zM12.500 12.500h8v8h-8z"/><path fill="#a8dbfa" stroke="#3d94dc" stroke-width="1.500" d="M12 1h9v9h-9zM1 12h9v9H1z"/></svg><span data-w="117">Invertir selección</span></div>
      </div>
      <div class="flex justify-center text-[#b5b5b5]"><span data-w="78">Seleccionar</span></div>
    </div>
  </div>

  <!-- Barra de direcciones -->
  <div class="flex h-[59px] shrink-0 items-start pt-[6px] pl-[18px] text-[17px]">
    <svg class="h-[46px] w-[140px]" viewBox="0 0 140 46" fill="none" stroke="#fff" stroke-width="2"><path d="M20 24H1m8-9-8 9 8 9"/><path stroke="#777" d="M47 24h19m-8-9 8 9-8 9"/><path d="m84 21 6 6 6-6M121 34V15m-8 8 8-9 8 9"/></svg>
    <div class="flex h-[46px] w-[1515px] items-center border border-[#535353] pl-[6px]">
      <svg class="h-[21px] w-[14px]"><use href="#qfold"/></svg>
      <div id="crumbs" class="flex items-center"></div>
      <svg class="mr-[15px] ml-auto h-[8px] w-[14px] text-[#aaa]" viewBox="0 0 14 8"><path d="m1 1 6 6 6-6" fill="none" stroke="currentColor" stroke-width="2.400"/></svg>
      <i class="h-full w-px bg-[#2b2b2b]"></i>
      <svg class="mr-[14px] ml-[15px] h-[17px] w-4" viewBox="0 0 16 17" fill="none" stroke="#aaa" stroke-width="2"><path d="M12 3a6.500 6.500 0 1 1-7-1"/><path d="M6 .500v6H1" transform="matrix(-1 0 0 1 16 0)"/></svg>
    </div>
    <div class="ml-3 flex h-[46px] w-[223px] items-center border border-[#535353] pl-[21px] text-[#767676]">
      <svg class="h-[18px] w-[20px]" viewBox="0 0 20 18" fill="none" stroke="#858585" stroke-width="1.300"><circle cx="13" cy="6.500" r="5.500"/><path d="m9 11-8 7"/></svg>
      <span data-w="154" class="ml-[19px]">Buscar en HW10A...</span>
    </div>
  </div>

  <div class="flex h-[720px] shrink-0 text-[17px]">
    <div class="flex w-[206px] flex-col overflow-hidden"><div id="tree" class="flex flex-col pt-px"></div></div>
    <div class="flex w-6 flex-col items-center bg-[#171717] text-[#777]">
      <svg class="mt-3 h-[8px] w-3 shrink-0 rotate-180" viewBox="0 0 8 5"><use href="#chev"/></svg>
      <div class="mt-[97px] h-[577px] w-full shrink-0 bg-[#4d4d4d]"></div>
      <svg class="mt-[9px] h-[8px] w-3 shrink-0" viewBox="0 0 8 5"><use href="#chev"/></svg>
    </div>
    <div class="ml-[2px] w-[3px] bg-[#2c2c2c]"></div>
    <div class="relative flex flex-1 flex-col bg-[#202020]">
      <svg class="absolute top-[2px] left-[233px] h-[6px] w-3 text-[#888]" viewBox="0 0 12 6"><path d="m.5 5.500 5.500-5 5.500 5" fill="none" stroke="currentColor"/></svg>
      <div class="flex h-[42px] text-[#dedede] [&>div]:flex [&>div]:items-center [&>div]:border-r [&>div]:border-[#5a5a5a]">
        <div class="w-[461px] pt-1 pl-[19px]"><i class="mb-1 h-[18px] w-[19px] bg-white"></i><span data-w="65" class="ml-4">Nombre</span></div>
        <div class="w-[243px] pt-1 pl-[9px]"><span data-w="176">Fecha de modificación</span></div>
        <div class="w-[203px] pt-1 pl-[9px]"><span data-w="34">Tipo</span></div>
        <div class="w-[135px] pt-1 pl-[9px]"><span data-w="61">Tamaño</span></div>
      </div>
      <div id="files" class="flex flex-col pt-[11px] pl-[55px] text-[#dedede]"></div>
    </div>
  </div>

  <footer class="flex h-[35px] shrink-0 items-center bg-[#333] pl-[22px] text-[16px] text-[#e4e4e4]">
    <span data-w="97">3 elementos</span><i class="ml-[15px] h-[18px] w-[2px] bg-white"></i>
    <span class="ml-auto flex h-[35px] w-[32px] items-center justify-center border border-[#888] bg-[#666]"><svg class="h-5 w-5" stroke="#ddd"><path stroke-width="4" stroke-dasharray="4 2" d="M4 0v20"/><path stroke="#888" d="M9 2h4M15 2h4M9 8h4M15 8h4M9 14h4M15 14h4"/></svg></span>
    <svg class="mr-[12px] ml-1 h-4 w-[22px]"><use href="#pic"/></svg>
  </footer>
  <div class="flex h-[60px] shrink-0 items-stretch bg-[#1d1d1d]">
    <div id="barR" class="flex"></div>
    <div class="ml-[5px] flex w-[26px] flex-col items-center justify-between bg-[#f0f0f0] py-[11px] text-[#555]"><svg class="h-[8px] w-3 rotate-180" viewBox="0 0 8 5"><use href="#chev"/></svg><svg class="h-[8px] w-3" viewBox="0 0 8 5"><use href="#chev"/></svg></div>
    <div class="flex items-center">
      <svg class="h-[40px] w-[340px]" viewBox="0 0 340 40" fill="none" stroke="#fff" stroke-width="1.600">
        <path d="m15 24 8-9 8 9"/>
        <g stroke="none" fill="#d5122f"><path d="m62 8 10 8 12-8-5 14 7 10-12-3-10 4 3-10z"/></g>
        <g stroke="#bbb"><path d="M112 30a20 20 0 0 1 18-19M116 30a15 15 0 0 1 14-14M121 30a10 10 0 0 1 9-9M126 30a4 4 0 0 1 4-4"/></g>
        <path d="M164 14h16v14h-16zM160 18h4v6h-4zM159 10h6v4"/><path fill="#fff" d="M168 17h10v8h-10z"/>
        <use href="#dish" x="207" y="8" width="24" height="24"/>
        <rect x="260" y="8" width="8" height="15" rx="4" fill="#fff"/><path d="M257 19c0 10 14 10 14 0M264 27v5"/>
        <path stroke="#ccc" d="M302 17h5l6-5v17l-6-5h-5z"/><path stroke="#888" d="M316 17c2 2 2 6 0 8M319 14c4 4 4 10 0 14M322 11c6 6 6 13 0 19"/>
      </svg>
      <span data-w="29" class="ml-2 text-[16px]">ESP</span>
      <div class="ml-[29px] flex w-[71px] flex-col items-center text-[16px] leading-[29px]"><span data-w="32">0:05</span><span data-w="71">9/6/2021</span></div>
      <svg class="ml-[29px] h-[44px] w-12" viewBox="0 0 48 44"><path fill="#fff" d="M4 8h24v19H16l-6 6v-6H4z"/><path stroke="#1d1d1d" stroke-width="1.600" d="M8 13h16M8 18h16M8 23h10"/><circle cx="28" cy="32" r="11" fill="#2a2a2a" stroke="#999" stroke-width="1.200"/><text x="23.500" y="38" font-size="16" fill="#fff">2</text></svg>
    </div>
    <i class="mr-2 ml-auto w-px bg-[#555]"></i>
  </div>
</section>
</div>

<script>
const $ = id => document.getElementById(id);

// Vertical dock tabs: label, tab height, text length, icon
const dock = [
  ['Diagram Navigator', 130, 89, '<path fill="#c23a4a" d="M0 5h5v11H0z"/><path fill="#3c8b46" d="M3 4h5v11H3z"/><path fill="#e8cf3a" stroke="#8d7a12" d="M6.500.500h10v12h-10z"/><path fill="#fff" stroke="#8d7a12" d="M10 4h3v4h-3z"/>'],
  ['Model Explorer', 112, 70, '<path fill="#6f7785" stroke="#333" d="M3 2h12l2 3v9H6l-5-3z"/><path fill="#dfe4ec" stroke="#333" d="M4 4h9v8H4z"/><path fill="#8fb8e8" d="M7 5h3v5H7z"/>'],
  ['Property', 83, 41, '<path fill="#2f6fc0" stroke="#123f80" d="M2.500.500h14v15h-14z"/><path fill="#dce8f6" d="M6 2h9v12H6z"/><path stroke="#2f6fc0" stroke-width="1.500" d="M7 5h3M11.500 5h3M7 9h3M7 12l3-2M11.500 10l3 3"/>'],
  ['Diagram Backlog', 119, 78, '<path fill="none" stroke="#2d9a74" stroke-width="2" d="M2 9c0-5 3-6 7-6M6 0l4 3-4 3"/><circle cx="4" cy="13" r="3" fill="#b9d2f2" stroke="#6a8bb8"/><path fill="#555" d="M9 9h2v7H9zM12 9h2v7h-2zM15 9h2v7h-2z"/><path fill="none" stroke="#bbb" d="M11.500.500h5v6h-5z"/>'],
];
$('sideTabs').innerHTML = dock.map(([t, h, w, ic]) => `
  <div class="flex w-[22px] shrink-0 flex-col items-center justify-end gap-[4px] rounded-r-[4px] border border-l-0 border-[#8e9095] bg-linear-to-r from-white to-[#ececec] pb-[2px]" style="height:${h}px">
    <div class="flex w-4 items-center [writing-mode:vertical-rl] rotate-180" style="height:${w}px"><span data-v="${w}">${t}</span></div>
    <svg class="h-4 w-[18px] shrink-0" viewBox="0 0 18 16">${ic}</svg>
  </div>`).join('');

// Palette icons, drawn in an 18x16 box
const blueDoc = s => `<path fill="url(#gBlue)" stroke="#3a78b8" stroke-width=".6" d="M2.500.500h13v15h-13z"/>` + (s ? `<text x="9" y="8.500" text-anchor="middle" font-size="8" font-weight="700">${s}</text><path stroke="#2b5f98" d="M5 11.500h8"/>` : '<path stroke="#2b5f98" d="M5 4.500h8M5 6.500h8M5 11.500h8"/>');
const ormDoc = s => `<path fill="#e6eff9" stroke="#6a98c8" stroke-width=".7" d="M3 1h12v14.500H3z"/><path stroke="#8ab2dc" d="M5 9.500h8M5 11.500h8"/><text x="9" y="7" text-anchor="middle" font-size="${s.length > 3 ? 6 : 7.5}" font-weight="700">${s}</text>`;
const ster = s => `<text x="3.500" y="8" text-anchor="middle" font-size="8" fill="#555">«</text><text x="9" y="7.500" text-anchor="middle" font-size="8.500" font-weight="700">${s}</text><text x="14.500" y="8" text-anchor="middle" font-size="8" fill="#555">»</text><path stroke="#333" stroke-dasharray="2 1" d="M1 10.500h13"/><path fill="none" stroke="#333" d="m13 8 3.500 2.500L13 13"/>`;
const pal = [
  ['Class', 25, blueDoc('')], ['Interface', 45, blueDoc('&lt;i&gt;')], ['Enumeration', 60, blueDoc('&lt;e&gt;')], ['Primitive', 40, blueDoc('&lt;P&gt;')],
  ['ORM-Persistable Class', 107, ormDoc('‹P›')], ['ORM-Abstract-Persistable Class', 152, ormDoc('‹AP›')], ['ORM-User-Type Class', 105, ormDoc('‹U›')], ['ORM-Parameterized-Type Class', 152, ormDoc('‹Pa›')],
  ['Entity Bean', 55, '<path fill="#f0d958" stroke="#b49b20" stroke-width=".7" d="M2.500 3c0-3 11-3 11 0v10c0 3-11 3-11 0z"/><ellipse cx="8" cy="3" rx="5.300" ry="2" fill="#fff2a6"/><ellipse cx="12.500" cy="12.500" rx="4.500" ry="2.800" transform="rotate(-20 12.500 12.500)" fill="#8a4b24"/>'],
  ['Generalization', 68, '<path fill="none" stroke="#222" stroke-width="1.300" d="M7 4 1 8l6 4zM7 8h11"/>'],
  ['Realization', 52, '<path fill="#7fb4e8" stroke="#222" d="M7 5 1 9.500 7 14z"/><path stroke="#333" stroke-dasharray="2 1" d="M7 9.500h10"/><text x="8" y="8" font-size="10" font-weight="700">R</text>'],
  ['Usage', 30, ster('U')],
  ['Association', 54, '<path stroke="#8a8a8a" stroke-width="1.800" d="M0 8h18"/>'],
  ['Aggregation', 59, '<path fill="#fff" stroke="#333" d="m1 8 3-3 3 3-3 3z"/><path stroke="#333" stroke-width="1.300" d="M7 8h11"/>'],
  ['Composition', 58, '<path fill="#222" d="m1 8 3-3.500L7.500 8 4 11.500z"/><path stroke="#333" stroke-width="1.300" d="M7 8h11"/>'],
  ['N-ary Association', 84, '<path fill="#6fb3f0" stroke="#3d88d0" d="m1.500 8 7.500-5.500L16.500 8 9 13.500z"/>'],
  ['Association Class', 82, '<path stroke="#333" stroke-width="1.300" d="M1 1.500h16"/><path stroke="#333" stroke-dasharray="2 1" d="M9.500 2v7"/><path fill="#4b8fd6" stroke="#2a62a2" d="M4.500 9.500h9v5h-9z"/>'],
  ['Dependency', 60, '<path stroke="#333" stroke-width="1.200" stroke-dasharray="3 1.500" d="M2 8h13"/><path fill="none" stroke="#333" stroke-width="1.300" d="m11.500 4 5 4-5 4"/>'],
  ['Binding Dependency', 97, ster('b')], ['Permission', 50, ster('p')], ['Access', 33, ster('a')], ['Import', 32, ster('i')], ['Merge', 30, ster('m')],
  ['Instantiation', 61, ster('i')], ['Substitution', 57, ster('s')], ['Abstraction', 55, ster('a')], ['Derive', 31, ster('d')], ['Refine', 31, ster('r')], ['Trace', 27, ster('t')],
  ['Collaboration', 63, '<ellipse cx="9" cy="8" rx="7.800" ry="4.700" fill="#4a94dc" stroke="#2f70b8" stroke-dasharray="1.500 1"/>'],
  ['Model', 28, '<path fill="url(#gBlue)" stroke="#2a62a2" d="M.5.500h6v3h11v12H.5z"/><path fill="none" stroke="#123" d="M4 7h8v2M12 8l-2.500 4h5z"/>'],
  ['REST Service', 63, '<path fill="#fff" stroke="#555" stroke-width="1.300" d="M1.500 1h15v13.500h-15z"/><path stroke="#555" d="M1.500 4.500h15M6 2.500h6"/><path stroke="#555" stroke-width="1.500" d="M3 14v2M15 14v2"/>'],
  ['Note', 23, '<path fill="#4a9ee2" stroke="#1d5ea4" d="M.5 2.500h13l4 3.500v8H.5z"/><path stroke="#134a80" d="M3 6.500h8M3 8.500h11M3 10.500h10"/><path fill="#cfe5fa" d="M13.500 2v4h4z"/>'],
];
$('palette').innerHTML = pal.map(([t, w, ic]) => `
  <div class="flex h-6 shrink-0 items-center pl-[5px]"><svg class="h-4 w-[18px]" viewBox="0 0 18 16" font-family="DejaVu Sans Condensed">${ic}</svg><span data-w="${w}" class="ml-1">${t}</span></div>`).join('');

// Class diagram
const boxes = [
  ['Area', 312, 331, 481, 523.5, 354.3, 450.4, ['-position : String', '-location : string', '-size : float', '-capacity : int'], ['+AddColony()', '+addFood()']],
  ['Colony', 631.5, 316.5, 806, 510.7, 339.3, 413.3, ['-ant : ant[]', '-size : float', '-type : string'], ['+AddAnt()', '+RemoveAnt()', '+feedAnt()']],
  ['Direction', 303.6, 650.3, 491.4, 808, 673.2, 747.1, ['-area : float', '-destination : string', '-size : float'], ['+harbor(area : area[])']],
  ['Pheromone', 613.7, 671.5, 823.5, 823.6, 694.3, 768.2, ['-concentration : float', '-amount : float', '-type : String'], ['+ToPut()']],
  ['Ant', 1030.500, 316.3, 1212.4, 537.5, 339.3, 390.5, ['-Type : string', '-Size : float'], ['+ToWalk()', '+Eat()', '+ToDrink()', '+reproduction()', '+AddFood()']],
  ['Food', 1372, 236.5, 1543.5, 394.8, 259.5, 333.6, ['-Type : string', '-weight : float', '-amount : float'], ['+feed()']],
  ['Time', 1722.4, 250.4, 1881, 406.5, 273.4, 347.5, ['-hour : int', '-day : int', '-month : int'], ['+increase()']],
  ['Tick', 1393.2, 423.4, 1543.5, 609.4, 446, 520, ['-size : float', '-amount : int', '-type : string'], ['+eat()', '+ToDrink()', '+reproduction()']],
  ['GroundCells', 1040, 678.4, 1203, 879.6, 701, 775.5, ['-size : float', '-type : String', '-amount : float'], ['+ToPut()', '+multiplice()', '+reproduction()']],
];
const esc = s => s.replace(/</g, '&lt;').replace(/>/g, '&gt;');
const label = (x, y, s) => `<text x="${x}" y="${y + 5.3}">${esc(s)}</text>`;
const line = (d, dash) => `<path d="${d}" fill="none"${dash ? ' stroke-dasharray="8 6.600"' : ''}/>`;
$('diagram').innerHTML = `<g font-family="Liberation Sans, Arial, sans-serif" font-size="16.3">
  <g stroke="#000" stroke-width="1.500">
    ${line('M483.500 394.500H504M615 394.500h17')}
    ${line('M483.500 481.500H632', 1)}${line('m615 472.500 18 9-18 9.200')}
    ${line('M808 371.500h221', 1)}${line('m1011.800 363 18 8.500-18 9.500')}
    ${line('M808 447h222')}${line('M351.700 526.500V650')}
    ${line('M771.700 513v76M771.700 616v55', 1)}${line('m762.300 653.600 9.400 17.400 9-17.400')}
    ${line('m1029.600 540-88 57M925.500 607 855 653')}${line('M834.500 654.300 855 653l-11.600 15.600L825 672z')}${line('m835 665.700 7-4')}
    <path d="m825 747 18-9 18.600 9-18.600 9.800z"/>${line('M861 747.500h179')}
    ${line('M1214.800 317.500H1372')}${line('M1214.800 525.500H1307M1381 525.500h12')}
    ${line('M1545.800 345.500H1627M1694 345.500h28', 1)}${line('m1704.800 336.200 17.600 9.300-17.600 9.400')}
  </g>
  <path d="m520.600 383 11 6-11 6.300zM878.400 430.700l11 6-11 6zM1260 300.700l11.700 6-11.700 6zM255.700 594l6.300-11.300 6.300 11.300z"/>
  ${label(538, 389.600, 'contains')}${label(896, 436.400, 'contains')}${label(274, 588.600, 'contains')}
  ${label(517.500, 437, '<<use>>')}${label(884.700, 360.700, '<<use>>')}${label(785, 602.200, '<<use>>')}${label(993.500, 630.400, '<<use>>')}
  ${label(940, 609.300, 'Atract')}${label(900.400, 735.700, 'component')}${label(1277, 306.300, 'Feeds')}${label(1324, 526.300, 'Feed')}${label(1647, 355.700, 'use')}
  ${boxes.map(([n, x, y, r, b, h, m, at, op]) => `
    <rect x="${x}" y="${y}" width="${r - x}" height="${b - y}" fill="#7acff5" stroke="#000" stroke-width="1.600"/>
    <path d="M${x} ${h}H${r}M${x} ${m}H${r}" stroke="#000" stroke-width="1.600"/>
    <text x="${(x + r) / 2 - .5}" y="${h - 4.500}" text-anchor="middle" font-weight="700">${n}</text>
    ${at.map((s, i) => label(x + 3.500, h + 16.500 + i * 22.500, s)).join('')}${op.map((s, i) => label(x + 3.500, m + 16 + i * 22.500, s)).join('')}`).join('')}
</g>`;

// Taskbars
const sys = ['win', 'search', 'ring', 'tview'];
const apps = ['ppt', 'fold', 'nfx', 'mail', 'chat', 'chrome', 'dish', 'gimp', 'cal', 'word', 'edge', 'cam', 'zoom', 'nb', 'office', 'vp', 'git', 'cc', 'photos'];
const on = { fold: 1, chrome: 2, word: 2, nb: 1, vp: 1, git: 1, cc: 1, photos: 1 };
const mark = a => !on[a] ? '' : a == 'fold'
  ? '<i class="absolute inset-x-0 bottom-0 h-[2px] bg-[#f29aa5]"></i>'
  : `<i class="absolute inset-x-[10%] bottom-0 flex h-[2px] bg-[#f29aa5]">${on[a] == 2 ? '<b class="ml-auto w-[20%] bg-[#a8717a]"></b>' : ''}</i>`;
$('barL').innerHTML = sys.map(a => `<div class="flex w-12 items-center justify-center"><svg class="h-6 w-6"><use href="#${a}"/></svg></div>`).join('')
  + '<div class="w-[2px]"></div>'
  + apps.map(a => `<div class="relative flex w-[49px] items-center justify-center ${a == 'fold' ? 'bg-[#4d4b4a]' : ''}"><svg class="h-6 w-6"><use href="#${a}"/></svg>${mark(a)}${a == 'mail' ? '<span class="absolute right-[3px] bottom-[4px] flex h-[17px] w-[27px] items-center justify-center rounded-full border border-[#888] bg-[#2b2b2b] text-[11px]">99+</span>' : ''}</div>`).join('');
$('barR').innerHTML = sys.map(a => `<div class="flex w-[72px] items-center justify-center"><svg class="h-[34px] w-[34px]"><use href="#${a}"/></svg></div>`).join('')
  + '<div class="w-[3px]"></div>'
  + apps.slice(0, 17).map(a => `<div class="relative flex w-[60.3px] items-center justify-center ${a == 'fold' ? 'bg-[#4a4a4a]' : ''}"><svg class="h-[34px] w-[34px]"><use href="#${a}"/></svg>${mark(a)}${a == 'mail' ? '<span class="absolute right-0 bottom-[7px] flex h-6 w-10 items-center justify-center rounded-full border border-[#888] bg-[#2b2b2b] text-[16px]">99+</span>' : ''}</div>`).join('');

// Breadcrumbs
const crumbs = [['Este equipo', 92], ['Disco local (C:)', 115], ['Usuarios', 68], ['DELL 5470', 82], ['ESPE202105-OOP-SW-3682', 223], ['assignments', 99], ['gualotuñar', 86], ['unit1', 39], ['HW10AntClassDiag', 155]];
$('crumbs').innerHTML = crumbs.map(([t, w], i) => `<svg class="${i ? 'mr-[13.500px] ml-[13.500px]' : 'mr-[13px] ml-[17px]'} h-[10px] w-[7px]" viewBox="0 0 7 10"><path d="m1 .500 4.500 4.500L1 9.500" fill="none" stroke="#8a8a8a" stroke-width="2"/></svg><span data-w="${w}">${t}</span>`).join('');

// Navigation tree: label, width, icon, pinned / selected / top level
const U = (id, c) => `<svg class="${c}"><use href="#${id}"/></svg>`;
const F = U('qfold', 'h-[21px] w-[15px]'), D = U('docb', 'h-[22px] w-[17px]'), P = U('pic', 'h-4 w-[22px]');
const S = (b, k) => `<svg class="h-[22px] w-6" viewBox="0 0 24 22">${b}</svg>`;
const tree = [
  ['Documentos', 101, D, 'pin'], ['Imágenes', 76, P, 'pin'], ['fotos', 41, F, 'pin'], ['.preview', 65, F], ['HW01JreJdk', 97, F], ['NetBeansProject', 127, F], ['WS08DefiningO', 127, F],
  0, ['OneDrive', 74, S('<path fill="#0f6cc4" d="M6 17a5 5 0 0 1 0-9c3-6 11-5 12 1 5 0 6 7 2 8z"/><path fill="#2ba0ee" d="M3 17c-2-4 3-7 7-5l9-3c5 0 6 7 2 8z"/>'), 'top'],
  0, ['Este equipo', 93, S('<path fill="#49a8e8" stroke="#cfe6f6" d="m8 2 15 3v12L8 13z"/><path fill="#d6dce2" d="m0 17 9-2 9 3-8 3z"/>'), 'top'],
  ['Descargas', 80, S('<path fill="#3b96e2" d="M9 1h7v9h5l-8.500 10L4 10h5z"/>')], ['Documentos', 101, D], ['Escritorio', 72, '<svg class="h-4 w-[22px]"><path fill="#1596ef" stroke="#46b5fb" d="M.5.500h21v15H.5z"/><path stroke="#bfe4fd" stroke-dasharray="2 14" d="M2 13.500h18"/></svg>'],
  ['Imágenes', 76, P], ['Música', 54, S('<path fill="#1a97ef" d="M11 1c2 5 8 5 8 13l-3 2c1-5-1-6-3-7v9c-1 4-9 4-8-.500 1-3 4-3 6-2.500z"/>')], ['Objetos 3D', 91, S('<path fill="#b9f0f5" d="m12 0 11 4-11 4L1 4z"/><path fill="#6fdbe6" d="m1 4 11 4v14L1 18z"/><path fill="#1ea3b8" d="m23 4-11 4v14l11-4z"/>')],
  ['Vídeos', 53, S('<path fill="#3a3a3a" stroke="#777" stroke-dasharray="2 2" d="M1.500.500h21v21h-21z"/><path fill="#5a82d8" d="M5 1h14v9H5zM5 12h14v9H5z"/><path fill="#d84a3a" d="M9 3h6v4H9z"/><path fill="#e8c33a" d="M10 16h6v4h-6z"/>')],
  ['Disco local (C:)', 114, S('<path fill="#35b6e6" d="M1 3h4v4H1zM6 3h4v4H6zM1 8h4v4H1zM6 8h4v4H6z"/><path fill="#d9d9d9" d="m2 14 9-4 12 4-12 6z"/><path fill="#9a9a9a" d="m2 14 9 4v3l-9-4zM23 14l-12 4v3l12-4z"/>'), 'sel'],
  0, ['Red', 29, S('<circle cx="15" cy="8" r="8" fill="#9cc8e2"/><path fill="#5fa0cc" d="M10 3c5 1 8 5 8 11l4-4c1-5-5-11-12-7z"/><path fill="#2f9fe8" stroke="#bfe0f5" d="m1 6 14 2v9L1 15z"/><path fill="#ccc" d="M5 18h6v3H5z"/>'), 'top'],
];
$('tree').innerHTML = tree.map(r => r ? `
  <div class="flex h-9 shrink-0 items-center ${r[3] == 'top' ? 'pl-9' : 'pl-12'}">
    <div class="flex h-[34px] items-center ${r[3] == 'sel' ? '-ml-[47px] w-[203px] shrink-0 bg-[#333] pl-[47px]' : ''}">
      <span class="flex w-6 shrink-0 justify-center">${r[2]}</span><span data-w="${r[1]}" class="${r[3] == 'top' ? 'ml-[5px]' : 'ml-[6px]'}">${r[0]}</span>
    </div>${r[3] == 'pin' ? '<svg class="mr-[5px] ml-auto h-4 w-4 shrink-0"><use href="#pin"/></svg>' : ''}
  </div>` : '<div class="h-3 shrink-0"></div>').join('');

// File list
const vpIcon = '<svg class="h-[22px] w-[17px]" viewBox="0 0 17 22"><path fill="#f4f4f4" stroke="#bbb" d="M.5.500h12l4 4v17H.5z"/><path fill="#c8393a" d="m8.500 3 6 6-6 6-6-6z"/><path fill="#fff" d="m8.500 6 2.500 2.500L8.500 11 6 9z"/><path stroke="#c8393a" stroke-width="2" stroke-dasharray="2 1" d="M4 18.500h9"/></svg>';
const files = [['.AntColony.vpp.lck', 148, 'Archivo LCK', 93, '0 KB', 34], ['AntColony', 84, 'Visual Paradigm Proj...', 174, '636 KB', 54], ['AntColony.vpp.bak_000f', 195, 'Archivo BAK_000F', 143, '636 KB', 54]];
$('files').innerHTML = files.map(([n, nw, k, kw, s, sw], i) => `
  <div class="flex h-8 items-center"><div class="flex w-[415px] items-center text-white">${i == 1 ? vpIcon : U('doc', 'h-[22px] w-[17px]')}<span data-w="${nw}" class="ml-[10px]">${n}</span></div>
  <div class="w-[243px]"><span data-w="112">9/6/2021 0:04</span></div><div class="w-[203px]"><span data-w="${kw}">${k}</span></div><div class="flex w-[114px] justify-end"><span data-w="${sw}">${s}</span></div></div>`).join('');

// Track each label to its set width; run again while styles and fonts settle
const labels = [...document.querySelectorAll('[data-w],[data-v]')];
function fit() {
  labels.forEach(e => {
    e.style.cssText = 'display:inline-block;flex-shrink:0';
  });
  const sizes = labels.map(e => e.getBoundingClientRect());
  labels.forEach((e, i) => {
    const v = 'v' in e.dataset, w = +(v ? e.dataset.v : e.dataset.w);
    e.style.letterSpacing = ((w - (v ? sizes[i].height : sizes[i].width)) / e.textContent.length).toFixed(3) + 'px';
    e.style[v ? 'height' : 'width'] = w + 'px';
  });
}
fit();
addEventListener('load', fit);
document.fonts.ready.then(fit);
let frames = 0;
(function again() { fit(); if (frames++ < 20) requestAnimationFrame(again); })();
[50, 150, 400, 900].forEach(t => setTimeout(fit, t));
</script>
</body>
</html>
